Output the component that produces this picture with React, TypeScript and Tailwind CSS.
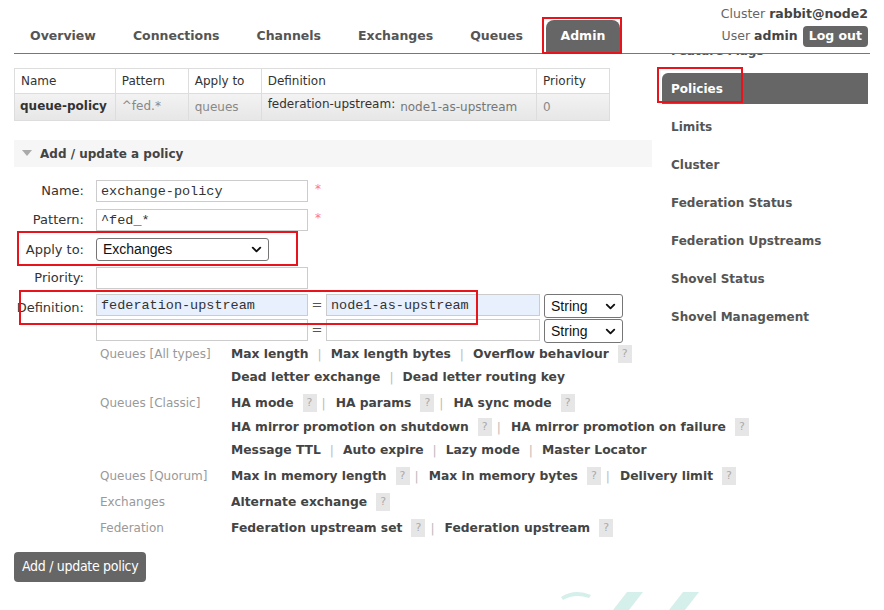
import React from 'react';
import { ChevronDown } from 'lucide-react';

const tabs = ['Overview', 'Connections', 'Channels', 'Exchanges', 'Queues', 'Admin'];

const sideItems = [
  'Feature Flags',
  'Policies',
  'Limits',
  'Cluster',
  'Federation Status',
  'Federation Upstreams',
  'Shovel Status',
  'Shovel Management',
];

type Item = { label: string; help?: boolean };
type Group = { title: string; lines: Item[][] };

const groups: Group[] = [
  {
    title: 'Queues [All types]',
    lines: [
      [{ label: 'Max length' }, { label: 'Max length bytes' }, { label: 'Overflow behaviour', help: true }],
      [{ label: 'Dead letter exchange' }, { label: 'Dead letter routing key' }],
    ],
  },
  {
    title: 'Queues [Classic]',
    lines: [
      [
        { label: 'HA mode', help: true },
        { label: 'HA params', help: true },
        { label: 'HA sync mode', help: true },
      ],
      [
        { label: 'HA mirror promotion on shutdown', help: true },
        { label: 'HA mirror promotion on failure', help: true },
      ],
      [{ label: 'Message TTL' }, { label: 'Auto expire' }, { label: 'Lazy mode' }, { label: 'Master Locator' }],
    ],
  },
  {
    title: 'Queues [Quorum]',
    lines: [
      [
        { label: 'Max in memory length', help: true },
        { label: 'Max in memory bytes', help: true },
        { label: 'Delivery limit', help: true },
      ],
    ],
  },
  { title: 'Exchanges', lines: [[{ label: 'Alternate exchange', help: true }]] },
  {
    title: 'Federation',
    lines: [[{ label: 'Federation upstream set', help: true }, { label: 'Federation upstream', help: true }]],
  },
];

const HelpBadge = () => (
  <span className="inline-flex items-center justify-center w-[14px] h-[18px] ml-[9px] bg-[#e6e6e6] text-[#aaa] text-[11px] font-normal">
    ?
  </span>
);

const TextInput = ({ value = '', className = '' }: { value?: string; className?: string }) => (
  <input
    readOnly
    value={value}
    className={`h-[22px] border border-[#ccc] px-[4px] text-[13.5px] text-[#333] font-['Liberation_Mono',monospace] outline-none ${className}`}
  />
);

const FakeSelect = ({ label, className = '' }: { label: string; className?: string }) => (
  <div
    className={`flex items-center justify-between border border-[#767676] rounded-[3px] bg-white pl-[6px] pr-[4px] text-[14px] text-[#111] font-['Liberation_Sans',Arial,sans-serif] ${className}`}
  >
    <span>{label}</span>
    <ChevronDown size={15} strokeWidth={3} className="text-[#111]" />
  </div>
);

const RedBox = ({ className }: { className: string }) => (
  <div className={`absolute border-2 border-[#e8141c] pointer-events-none ${className}`} />
);

export default function App() {
  return (
    <div className="relative w-[884px] h-[610px] overflow-hidden bg-white font-['DejaVu_Sans',Verdana,sans-serif] text-[12px] text-[#444]">
      {/* header */}
      <div className="ml-[14px] w-[856px] h-[54px] border-b border-[#777] flex justify-between">
        <nav className="flex items-end -ml-[2.5px]">
          {tabs.map((t) =>
            t === 'Admin' ? (
              <div
                key={t}
                className="mx-[4px] px-[15px] h-[33px] flex items-center rounded-t-[8px] bg-[#666] text-white font-bold text-[12.5px]"
              >
                {t}
              </div>
            ) : (
              <div key={t} className="px-[18.5px] h-[33px] flex items-center text-[#555] font-bold text-[12.5px]">
                {t}
              </div>
            ),
          )}
        </nav>
        <div className="flex flex-col items-end pt-[5px] pr-[2px]">
          <div className="leading-[18px] text-[#666] text-[12.5px]">
            Cluster <b className="text-[#444]">rabbit@node2</b>
          </div>
          <div className="mt-[3px] flex items-center text-[12.5px] text-[#666]">
            <span>
              User <b className="text-[#444]">admin</b>
            </span>
            <span className="ml-[5px] h-[21px] px-[6px] flex items-center rounded-[4px] bg-[#666] text-white font-bold">
              Log out
            </span>
          </div>
        </div>
      </div>

      <div className="flex">
        {/* main column */}
        <div className="ml-[14px] w-[638px]">
          <table className="mt-[14px] w-[596px] border-collapse border border-[#ddd] text-[12px]">
            <thead>
              <tr className="h-[25px] bg-white text-[#333]">
                <th className="w-[101px] border border-[#ddd] px-[6px] text-left font-normal">Name</th>
                <th className="w-[73px] border border-[#ddd] px-[6px] text-left font-normal">Pattern</th>
                <th className="w-[73px] border border-[#ddd] px-[6px] text-left font-normal">Apply to</th>
                <th className="w-[276px] border border-[#ddd] px-[6px] text-left font-normal">Definition</th>
                <th className="w-[73px] border border-[#ddd] px-[6px] text-left font-normal">Priority</th>
              </tr>
            </thead>
            <tbody>
              <tr className="h-[27px] bg-gradient-to-b from-[#f3f3f3] to-[#e6e6e6]">
                <td className="border border-[#ddd] px-[5px] align-top pt-[3px] font-bold text-[#333]">queue-policy</td>
                <td className="border border-[#ddd] px-[6px] align-top pt-[3px] text-[#888]">^fed.*</td>
                <td className="border border-[#ddd] px-[6px] align-top pt-[4px] text-[#888]">queues</td>
                <td className="border border-[#ddd] px-[6px] align-top">
                  <div className="flex items-start">
                    <span className="pt-[1px] text-[#333]">federation-upstream:</span>
                    <span className="ml-[5px] pt-[4px] text-[#777]">node1-as-upstream</span>
                  </div>
                </td>
                <td className="border border-[#ddd] px-[6px] align-top pt-[4px] text-[#888]">0</td>
              </tr>
            </tbody>
          </table>

          {/* section header */}
          <div className="mt-[19px] h-[27px] bg-[#f6f6f6] flex items-center pl-[8px]">
            <svg width="10" height="7" viewBox="0 0 10 7">
              <polygon points="0,0 10,0 5,6" fill="#aaa" />
            </svg>
            <span className="ml-[8px] font-bold text-[#444] text-[12px]">Add / update a policy</span>
          </div>

          {/* form */}
          <div className="mt-[13px] text-[13px] text-[#333]">
            <div className="flex items-center h-[22px]">
              <span className="w-[70px] text-right">Name:</span>
              <TextInput value="exchange-policy" className="ml-[12px] w-[212px]" />
              <span className="ml-[7px] self-start text-[#f77] text-[12px]">*</span>
            </div>
            <div className="mt-[7px] flex items-center h-[22px]">
              <span className="w-[70px] text-right">Pattern:</span>
              <TextInput value="^fed_*" className="ml-[12px] w-[212px]" />
              <span className="ml-[7px] self-start text-[#f77] text-[12px]">*</span>
            </div>
            <div className="mt-[7px] flex items-center h-[23px]">
              <span className="w-[70px] text-right">Apply to:</span>
              <FakeSelect label="Exchanges" className="ml-[12px] w-[173px] h-[23px]" />
            </div>
            <div className="mt-[6px] flex items-center h-[22px]">
              <span className="w-[70px] text-right">Priority:</span>
              <TextInput className="ml-[12px] w-[212px]" />
            </div>
            <div className="mt-[5px] flex items-start h-[24px]">
              <span className="w-[70px] text-right leading-[22px] mt-[3px]">Definition:</span>
              <TextInput value="federation-upstream" className="ml-[12px] w-[212px] bg-[#e8f0fe]" />
              <span className="w-[18px] text-center leading-[22px] text-[#555]">=</span>
              <TextInput value="node1-as-upstream" className="w-[214px] bg-[#e8f0fe]" />
              <FakeSelect label="String" className="ml-[4px] w-[79px] h-[24px]" />
            </div>
            <div className="mt-[1px] flex items-start h-[24px]">
              <span className="w-[70px]" />
              <TextInput className="ml-[12px] w-[212px]" />
              <span className="w-[18px] text-center leading-[22px] text-[#555]">=</span>
              <TextInput className="w-[214px]" />
              <FakeSelect label="String" className="ml-[4px] w-[79px] h-[24px]" />
            </div>
          </div>

          {/* help */}
          <div className="ml-[86px] mt-[-1px] text-[12px]">
            {groups.map((g) => (
              <div key={g.title} className="grid grid-cols-[131px_1fr] mb-[2.5px]">
                <div className="h-[23.5px] flex items-center text-[#999]">{g.title}</div>
                <div>
                  {g.lines.map((line, li) => (
                    <div
                      key={li}
                      className="h-[23.5px] flex items-center whitespace-nowrap font-bold text-[#444] text-[12.3px]"
                    >
                      {line.map((it, i) => (
                        <React.Fragment key={it.label}>
                          {i > 0 && (
                            <span
                              className={`font-normal text-[#bbb] ${line[i - 1].help ? 'ml-[5px] mr-[10px]' : 'mx-[9px]'}`}
                            >
                              |
                            </span>
                          )}
                          <span>{it.label}</span>
                          {it.help && <HelpBadge />}
                        </React.Fragment>
                      ))}
                    </div>
                  ))}
                </div>
              </div>
            ))}
          </div>

          <button className="mt-[9px] h-[30px] px-[8px] rounded-[4px] bg-[#666] text-white text-[14px] font-['DejaVu_Sans_Condensed','DejaVu_Sans',sans-serif] tracking-[-0.3px]">
            Add / update policy
          </button>
        </div>

        {/* sidebar */}
        <div className="ml-[3px] w-[223px] h-[556px] overflow-hidden">
          <ul className="-mt-[19px]">
            {sideItems.map((s) => (
              <li
                key={s}
                className={`ml-[7px] mr-[10px] h-[31px] mb-[7px] pl-[9px] flex items-center font-bold text-[12px] ${
                  s === 'Policies' ? 'bg-[#666] text-white rounded-tl-[6px]' : 'text-[#555]'
                }`}
              >
                {s}
              </li>
            ))}
          </ul>
        </div>
      </div>

      {/* faint watermark */}
      <svg className="absolute left-[555px] top-[588px]" width="170" height="22" viewBox="0 0 170 22">
        <path d="M6 9 Q20 0 36 7 L34 10 Q20 5 8 12 Z" fill="#d5efea" />
        <polygon points="72,4 88,4 74,22 58,22" fill="#d5efea" />
        <polygon points="128,4 144,4 130,22 114,22" fill="#d5efea" />
      </svg>

      {/* annotation boxes */}
      <RedBox className="left-[542px] top-[17px] w-[80px] h-[37px]" />
      <RedBox className="left-[657px] top-[67px] w-[86px] h-[36px]" />
      <RedBox className="left-[17px] top-[231px] w-[281px] h-[35px]" />
      <RedBox className="left-[19px] top-[290px] w-[459px] h-[35px]" />
    </div>
  );
}
